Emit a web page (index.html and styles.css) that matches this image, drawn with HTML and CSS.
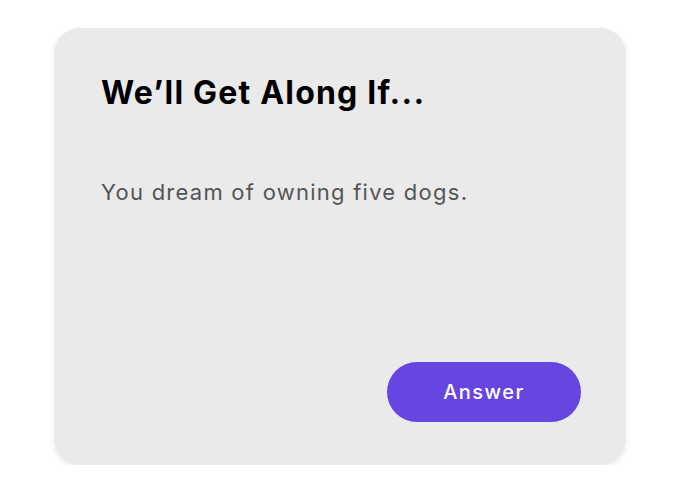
FILE: index.html
```html
<!DOCTYPE html>
<html lang="en">
<head>
    <meta charset="UTF-8">
    <meta name="viewport" content="width=device-width, initial-scale=1.0">
    <title>Get Along</title>
    <link rel="stylesheet" href="styles.css">
</head>
<body>
    <div class="card">
        <h1 class="card-title">We&rsquo;ll Get Along If...</h1>
        <p class="card-text">You dream of owning five dogs.</p>
        <div class="card-actions">
            <button class="answer-btn">Answer</button>
        </div>
    </div>
</body>
</html>
```

FILE: styles.css
```css
body {
    font-family: 'Inter', 'Noto Sans', sans-serif;
    background: #fff;
    margin: 0;
    padding-top: 28px;
    display: flex;
    flex-direction: column;
    align-items: center;
}
.card {
    background: #eaeaea;
    width: 572px;
    height: 437px;
    box-sizing: border-box;
    padding: 45px 45px 43px 47px;
    border-radius: 26px;
    box-shadow: 0 2px 6px rgba(0, 0, 0, 0.08);
    display: flex;
    flex-direction: column;
}
.card-title {
    margin: 0;
    font-size: 32px;
    line-height: 40px;
    font-weight: 700;
    letter-spacing: 1.2px;
    color: #000;
}
.card-text {
    margin: 64px 0 0;
    font-size: 22px;
    line-height: 30px;
    letter-spacing: 1.25px;
    color: #555;
}
.card-actions {
    margin-top: auto;
    display: flex;
    justify-content: flex-end;
}
.answer-btn {
    width: 194px;
    height: 60px;
    border: none;
    border-radius: 30px;
    background-color: #6645e0;
    color: #fff;
    font-family: inherit;
    font-size: 20px;
    font-weight: 500;
    letter-spacing: 1.5px;
    cursor: pointer;
}
```
